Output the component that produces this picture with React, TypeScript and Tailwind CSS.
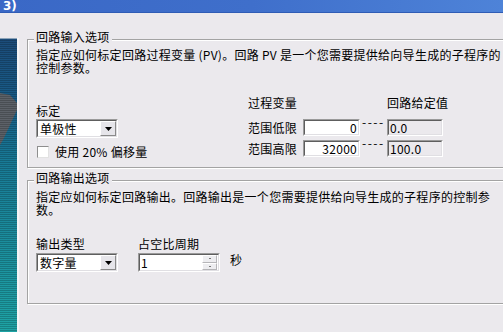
import React from "react";

const BG = "bg-[#ebe9ed]";

function Sunken({ className = "", inner = "", children }: { className?: string; inner?: string; children?: React.ReactNode }) {
  return (
    <div className={`border border-t-[#9a9a9a] border-l-[#9a9a9a] border-b-white border-r-white ${className}`}>
      <div className={`h-full w-full border border-t-[#5e5e5e] border-l-[#5e5e5e] border-b-[#e0dfe3] border-r-[#e0dfe3] flex ${inner}`}>
        {children}
      </div>
    </div>
  );
}

function Dropdown({ text, className = "" }: { text: string; className?: string }) {
  return (
    <Sunken className={`w-[82px] h-[19px] ${className}`} inner="bg-white">
      <span className="flex-1 pl-[2px] leading-[15px] whitespace-nowrap">{text}</span>
      <div className="w-[16px] h-full bg-[#e6e5ea] border border-t-white border-l-white border-b-[#8a8a8a] border-r-[#8a8a8a] flex items-center justify-center">
        <svg width="7" height="4" viewBox="0 0 7 4" className="block">
          <path d="M0 0h7L3.5 4z" fill="#000" />
        </svg>
      </div>
    </Sunken>
  );
}

function Spin() {
  return (
    <Sunken className="w-[82px] h-[19px]" inner="bg-white">
      <span className="flex-1 pl-[1px] leading-[15px]">1</span>
      <div className="w-[15px] h-full flex flex-col mr-[1px]">
        <div className="flex-1 bg-[#ededf0] border border-t-white border-l-white border-b-[#b5b5b8] border-r-[#b5b5b8] flex items-center justify-center">
          <div className="w-[2px] h-[1px] bg-[#777]" />
        </div>
        <div className="flex-1 bg-[#ededf0] border border-t-white border-l-white border-b-[#b5b5b8] border-r-[#b5b5b8] flex items-center justify-center">
          <div className="w-[2px] h-[1px] bg-[#777]" />
        </div>
      </div>
    </Sunken>
  );
}

function Row({ label, value, ref2, className = "" }: { label: string; value: string; ref2: string; className?: string }) {
  return (
    <div className={`flex h-[17px] ${className}`}>
      <span className="w-[55px] flex-none pt-[2px] whitespace-nowrap">{label}</span>
      <Sunken className="w-[57px] h-[17px] flex-none" inner="bg-white justify-end">
        <span className="pr-[1px] leading-[13px]">{value}</span>
      </Sunken>
      <span className="w-[27px] flex-none pl-[2px] -mt-[4px] leading-[13px] tracking-[1.5px] whitespace-nowrap">----</span>
      <Sunken className="w-[56px] h-[17px] flex-none" inner={BG}>
        <span className="pl-[1px] leading-[13px]">{ref2}</span>
      </Sunken>
    </div>
  );
}

export default function App() {
  return (
    <div className={`w-[503px] h-[332px] overflow-hidden ${BG} flex flex-col font-['Noto_Sans_CJK_SC',sans-serif] text-[12px] leading-[13px] tracking-[0.27px] text-black`}>
      <div className="h-[13px] flex-none bg-gradient-to-r from-[#3a68c6] via-[#3f6fcb] to-[#4e83d8] border-b border-[#2f5cb5] pl-[3px]">
        <span className="block font-['DejaVu_Sans',sans-serif] font-bold text-white text-[12px] leading-[12px] tracking-normal">3)</span>
      </div>
      <div className="flex flex-1 min-h-0">
        <div className="w-[19px] flex-none mt-[25px] border-r-2 border-[#f4f4f6]">
          <svg width="17" height="294" className="block">
            <defs>
              <linearGradient id="ig" x1="0" y1="0" x2="0" y2="1">
                <stop offset="0" stopColor="#1b4b79" />
                <stop offset="0.22" stopColor="#185c87" />
                <stop offset="0.42" stopColor="#187a96" />
                <stop offset="1" stopColor="#1ea3a5" />
              </linearGradient>
              <pattern id="is" width="17" height="2" patternUnits="userSpaceOnUse">
                <rect width="17" height="1" fill="#000" opacity="0.2" />
              </pattern>
            </defs>
            <rect width="17" height="294" fill="url(#ig)" />
            <polygon points="0,55 10,57 17,65 17,72 3,102 0,107" fill="#5c6168" />
            <rect width="17" height="294" fill="url(#is)" />
            <rect width="17" height="1" fill="#8ca3b8" />
          </svg>
        </div>
        <div className="ml-[8px] flex flex-col">
          <fieldset className="mt-[17px] w-[480px] border border-[#a3a3a3] shadow-[inset_1px_1px_0_#fff,1px_1px_0_#fff] px-[6px]">
            <legend className={`px-[2px] pb-[6px] leading-[13px] ${BG}`}>回路输入选项</legend>
            <div className="pl-[2px] pb-[9px]">
              <div className="whitespace-nowrap leading-[12.5px]">
                指定应如何标定回路过程变量 (PV)。回路 PV 是一个您需要提供给向导生成的子程序的
                <br />
                控制参数。
              </div>
              <div className="flex mt-[22px]">
                <div className="w-[212px] flex-none pt-[8px] flex flex-col">
                  <div>标定</div>
                  <Dropdown text="单极性" className="mt-[2px]" />
                  <div className="mt-[7px] flex items-center h-[13px]">
                    <div className="w-[12px] h-[12px] ml-[1px] border border-t-[#8e8e8e] border-l-[#8e8e8e] border-b-[#e2e2e2] border-r-[#e2e2e2] bg-white" />
                    <span className="ml-[6px] whitespace-nowrap">使用 20% 偏移量</span>
                  </div>
                </div>
                <div className="flex flex-col">
                  <div className="flex">
                    <span className="w-[139px]">过程变量</span>
                    <span>回路给定值</span>
                  </div>
                  <Row label="范围低限" value="0" ref2="0.0" className="mt-[10px]" />
                  <Row label="范围高限" value="32000" ref2="100.0" className="mt-[4px]" />
                </div>
              </div>
            </div>
          </fieldset>
          <fieldset className="mt-[3px] w-[480px] border border-[#a3a3a3] shadow-[inset_1px_1px_0_#fff,1px_1px_0_#fff] px-[6px]">
            <legend className={`px-[2px] pb-[6px] leading-[13px] ${BG}`}>回路输出选项</legend>
            <div className="pl-[2px] pt-[1px] pb-[31px]">
              <div className="whitespace-nowrap leading-[12.5px]">
                指定应如何标定回路输出。回路输出是一个您需要提供给向导生成的子程序的控制参
                <br />
                数。
              </div>
              <div className="flex mt-[21px]">
                <div className="w-[102px] flex-none flex flex-col">
                  <div>输出类型</div>
                  <Dropdown text="数字量" className="mt-[3px]" />
                </div>
                <div className="flex flex-col">
                  <div>占空比周期</div>
                  <div className="flex mt-[3px]">
                    <Spin />
                    <span className="ml-[10px]">秒</span>
                  </div>
                </div>
              </div>
            </div>
          </fieldset>
        </div>
      </div>
    </div>
  );
}
